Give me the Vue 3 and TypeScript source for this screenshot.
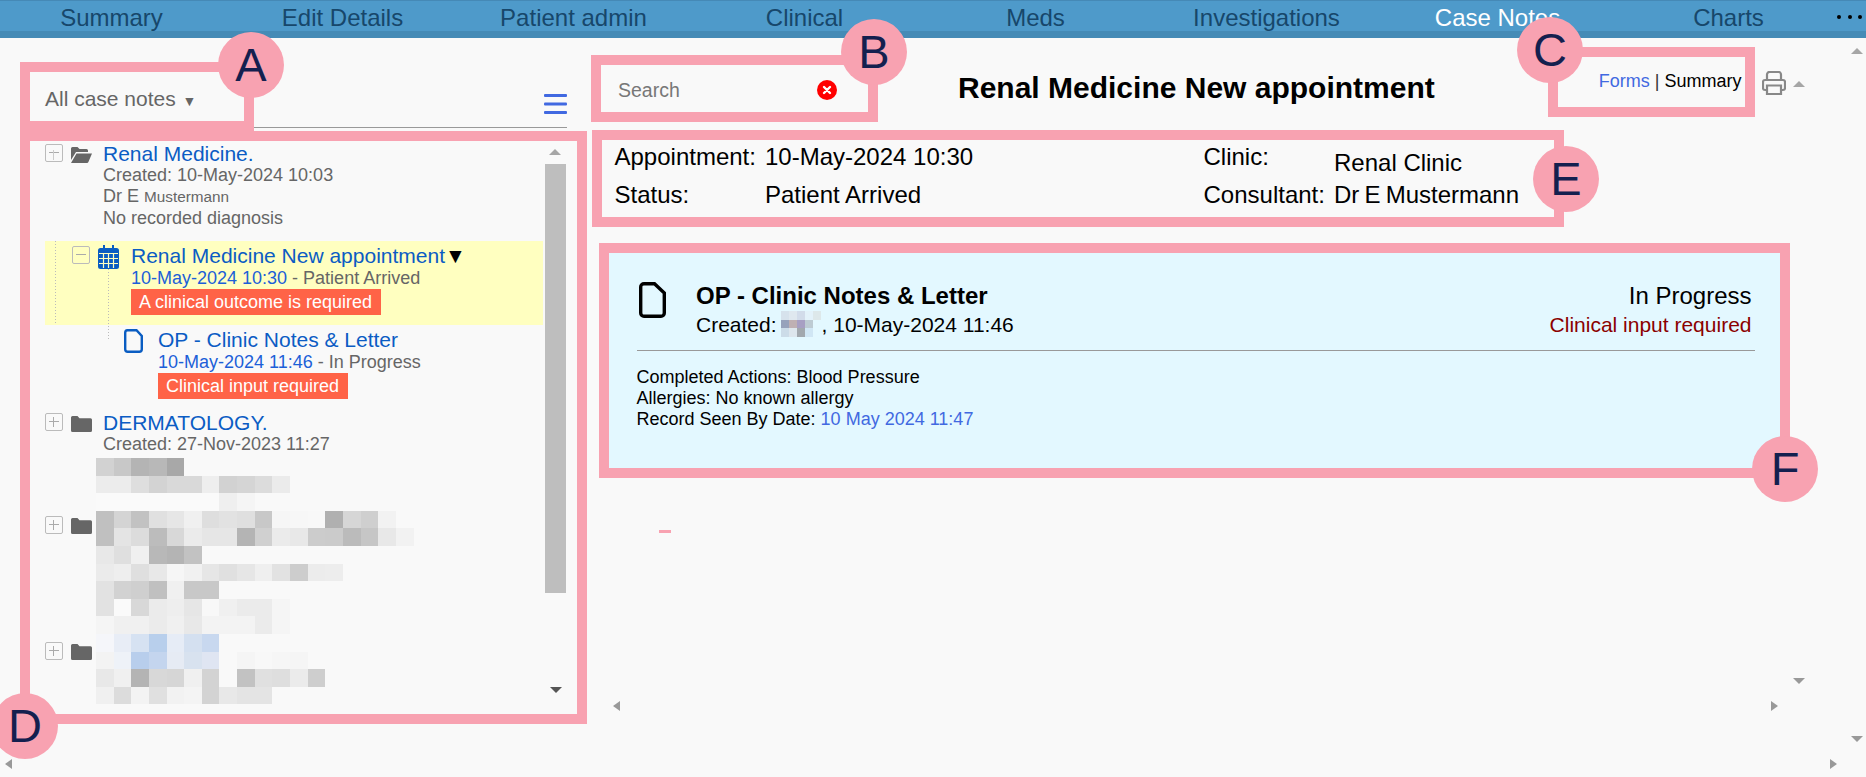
<script setup lang="ts">
const navItems = ['Summary', 'Edit Details', 'Patient admin', 'Clinical', 'Meds', 'Investigations', 'Case Notes', 'Charts']

// blurred patient details: two hex digits are a grey, six are a colour, empty is page background
const dermRows = [
  'd2 c8 b4 b8 a8',
  'ec ec de d3 d9 d9 ee d2 d5 dc eb',
  'fa fa fa fa fa fa fa ef f5',
]
const folderTwoRows = [
  'c0 d4 c2 e0 e6 f0 de e2 df c8 f6 f7 f8 b0 d6 cf f2',
  'c0 e4 dc bc d8 eb e6 e6 b4 d0 eb e8 cc cb bb c6 e8 f2',
  'e8 df f0 b8 b4 c2',
  'eb ee df e8 f6 f1 e6 e0 e6 ef e2 cd ec ed',
  'e2 d2 cf c0 f0 c8 c8',
  'e2 fa d8 eb ee e6 f8 f0 eb eb f5',
  'f5 f0 f0 eb f0 e8 f3 f3 f3 eb f5',
]
const folderThreeRows = [
  'f5f6fa e8edf6 d6e2f2 b8cfec e6ecf6 d4e0f0 c8d8ef',
  'f3 eef2f8 b8ceec c4d5ee e6ebf4 d8e2ef dfe5f2 f9 f5 f8 f6 f5',
  'e8 f0 b4 d8 d6 f0 d3 f9 c2 e0 de eb ce',
  'f0 dc f3 e0 f2 f4 d3 e8 e4 e4',
]
const authorRows = [
  'd6e2ec dfe8ef d2dcea e3f2fa dde8ea',
  '97a2bb bfb0b3 a79fc3 bdcbd3 e3f8ff',
  'ccdce8 dde6ed a2a8ae d0e6f4 e3f8ff',
]

function cells(row: string): string[] {
  return row.split(' ').map((c) => (c.length === 2 ? `#${c}${c}${c}` : `#${c}`))
}

const markers = ['a', 'b', 'c', 'd', 'e', 'f']
</script>

<template>
  <div class="page">
    <nav class="nav">
      <a v-for="item in navItems" :key="item" class="nav-item" :class="{ active: item === 'Case Notes' }">{{ item }}</a>
    </nav>

    <div class="workspace">
      <aside class="side">
        <div class="side-head">
          <span class="filter">All case notes <span class="filter-caret">▼</span></span>
          <svg class="burger" viewBox="0 0 23 20" fill="#4169e1">
            <rect width="23" height="3" rx="1" />
            <rect y="8.5" width="23" height="3" rx="1" />
            <rect y="17" width="23" height="3" rx="1" />
          </svg>
        </div>

        <div class="tree-wrap">
          <div class="tree">
            <div class="node">
              <span class="exp faint"></span>
              <svg class="folder" viewBox="0 0 21 16" fill="#666">
                <path d="M0 1.5A1.5 1.5 0 0 1 1.5 0h5l2 2h7A1.5 1.5 0 0 1 17 3.5V5H5L0 13z" />
                <path d="M5.5 6.5H21l-3.6 8.4a1.6 1.6 0 0 1-1.4 1H0z" />
              </svg>
              <div class="node-text">
                <a class="title">Renal Medicine.</a>
                <div class="meta">Created: 10-May-2024 10:03</div>
                <div class="meta">Dr E <span class="small-name">Mustermann</span></div>
                <div class="meta">No recorded diagnosis</div>
              </div>
            </div>

            <div class="appointment">
              <span class="exp"></span>
              <svg class="calendar" viewBox="0 0 21 24">
                <path fill="#0a5dc2" d="M5 0h2v3h7V0h2v3h2.5A2.500 2.500 0 0 1 21 5.500V21.500A2.500 2.500 0 0 1 18.500 24h-16A2.500 2.500 0 0 1 0 21.500V5.500A2.500 2.500 0 0 1 2.500 3H5z" />
                <path fill="none" stroke="#ffffc0" stroke-width="1.200" d="M1 8.500h19M1 13.500h19M1 18.500h19M5.500 8v15M10.500 8v15M15.500 8v15" />
              </svg>
              <div class="node-text">
                <a class="title">Renal Medicine New appointment<span class="title-caret">▼</span></a>
                <div class="meta dated"><span class="date">10-May-2024 10:30</span> - Patient Arrived</div>
                <span class="badge">A clinical outcome is required</span>
              </div>
            </div>

            <div class="document">
              <svg class="doc" viewBox="0 0 19 24" fill="none" stroke="#0a5dc2" stroke-width="2.400">
                <path d="M3.500 1.200H12.500L17.800 7v13.300a2.500 2.500 0 0 1-2.500 2.500H3.700A2.500 2.500 0 0 1 1.200 20.300v-16.600A2.500 2.500 0 0 1 3.500 1.200z" />
              </svg>
              <div class="node-text">
                <a class="title">OP - Clinic Notes &amp; Letter</a>
                <div class="meta dated"><span class="date">10-May-2024 11:46</span> - In Progress</div>
                <span class="badge">Clinical input required</span>
              </div>
            </div>

            <div class="node derm">
              <span class="exp plus"></span>
              <svg class="folder" viewBox="0 0 21 16" fill="#666">
                <path d="M0 1.500A1.500 1.500 0 0 1 1.500 0h5l2 2.200h11A1.500 1.500 0 0 1 21 3.700v10.800a1.500 1.500 0 0 1-1.500 1.500h-18A1.500 1.500 0 0 1 0 14.500z" />
              </svg>
              <div class="node-text">
                <a class="title">DERMATOLOGY.</a>
                <div class="meta">Created: 27-Nov-2023 11:27</div>
              </div>
            </div>
            <div class="mosaic derm-mosaic">
              <div v-for="(row, r) in dermRows" :key="r" class="mosaic-row">
                <i v-for="(c, i) in cells(row)" :key="i" :style="{ background: c }"></i>
              </div>
            </div>

            <div class="blur-node">
              <span class="exp plus"></span>
              <svg class="folder" viewBox="0 0 21 16" fill="#666">
                <path d="M0 1.500A1.500 1.500 0 0 1 1.500 0h5l2 2.200h11A1.500 1.500 0 0 1 21 3.700v10.800a1.500 1.500 0 0 1-1.500 1.500h-18A1.500 1.500 0 0 1 0 14.500z" />
              </svg>
              <div class="mosaic">
                <div v-for="(row, r) in folderTwoRows" :key="r" class="mosaic-row">
                  <i v-for="(c, i) in cells(row)" :key="i" :style="{ background: c }"></i>
                </div>
              </div>
            </div>

            <div class="blur-node third">
              <span class="exp plus"></span>
              <svg class="folder" viewBox="0 0 21 16" fill="#666">
                <path d="M0 1.500A1.500 1.500 0 0 1 1.500 0h5l2 2.200h11A1.500 1.500 0 0 1 21 3.700v10.800a1.500 1.500 0 0 1-1.500 1.500h-18A1.500 1.500 0 0 1 0 14.500z" />
              </svg>
              <div class="mosaic">
                <div v-for="(row, r) in folderThreeRows" :key="r" class="mosaic-row">
                  <i v-for="(c, i) in cells(row)" :key="i" :style="{ background: c }"></i>
                </div>
              </div>
            </div>
          </div>
          <div class="tree-scroll"><div class="thumb"></div></div>
        </div>
      </aside>

      <main class="main">
        <div class="top-row">
          <div class="search">
            <span class="search-text">Search</span>
            <svg class="clear" viewBox="0 0 20 20">
              <circle cx="10" cy="10" r="10" fill="#f00" />
              <path d="M7 7l6 6M13 7l-6 6" stroke="#fff" stroke-width="2.400" stroke-linecap="round" />
            </svg>
          </div>
          <h1 class="heading">Renal Medicine New appointment</h1>
          <div class="view-links"><a class="link">Forms</a> <span class="sep">|</span> Summary</div>
          <svg class="printer" viewBox="0 0 24 24" fill="none" stroke="#888" stroke-width="2.200">
            <path d="M5 9V3.500A2.500 2.500 0 0 1 7.500 1h9A2.500 2.500 0 0 1 19 3.500V9" />
            <path d="M5 19H3a2 2 0 0 1-2-2v-6a2 2 0 0 1 2-2h18a2 2 0 0 1 2 2v6a2 2 0 0 1-2 2h-2" />
            <path d="M5 14.500h14V23H5z" />
          </svg>
        </div>

        <div class="info">
          <span>Appointment:</span><span>10-May-2024 10:30</span><span>Clinic:</span><span class="clinic">Renal Clinic</span>
          <span>Status:</span><span>Patient Arrived</span><span>Consultant:</span><span class="consultant">Dr E Mustermann</span>
        </div>

        <section class="card">
          <div class="card-head">
            <svg class="card-icon" viewBox="0 0 27 36" fill="none" stroke="#000" stroke-width="3.400">
              <path d="M5 1.700H15.500L25.300 11v20a3.300 3.300 0 0 1-3.300 3.300H5A3.300 3.300 0 0 1 1.700 31V5A3.300 3.300 0 0 1 5 1.700z" />
            </svg>
            <div class="card-title">
              <strong>OP - Clinic Notes &amp; Letter</strong>
              <div class="created">
                <span>Created:</span>
                <span class="mosaic author">
                  <span v-for="(row, r) in authorRows" :key="r" class="mosaic-row">
                    <i v-for="(c, i) in cells(row)" :key="i" :style="{ background: c }"></i>
                  </span>
                </span>
                <span>, 10-May-2024 11:46</span>
              </div>
            </div>
            <div class="card-status">
              <div class="status-main">In Progress</div>
              <div class="status-alert">Clinical input required</div>
            </div>
          </div>
          <div class="card-body">
            <div>Completed Actions: Blood Pressure</div>
            <div>Allergies: No known allergy</div>
            <div>Record Seen By Date: <span class="link">10 May 2024 11:47</span></div>
          </div>
        </section>
      </main>
    </div>

    <span class="more"><i></i><i></i><i></i></span>

    <!-- scrollbar arrows -->
    <i class="arrow up tree-up"></i>
    <i class="arrow down tree-down"></i>
    <i class="arrow up print-up"></i>
    <i class="arrow up main-up"></i>
    <i class="arrow down main-down"></i>
    <i class="arrow left main-left"></i>
    <i class="arrow right main-right"></i>
    <i class="arrow down page-down"></i>
    <i class="arrow left page-left"></i>
    <i class="arrow right page-right"></i>

    <!-- annotation frames drawn on top of the screenshot -->
    <div v-for="m in markers" :key="m" class="frame" :class="`frame-${m}`"></div>
    <div class="stray"></div>
    <div v-for="m in markers" :key="m" class="marker" :class="`marker-${m}`">{{ m.toUpperCase() }}</div>
  </div>
</template>

<style>
html,
body {
  margin: 0;
  background: #f9f9f9;
}
</style>

<style scoped>
.page {
  position: relative;
  width: 1866px;
  height: 777px;
  overflow: hidden;
  background: #f9f9f9;
  color: #000;
  font-family: 'Liberation Sans', Arial, sans-serif;
}

.nav {
  display: grid;
  grid-template-columns: repeat(8, 231px);
  height: 38px;
  box-sizing: border-box;
  margin-left: -4px;
  background: #4e9aca;
  border-top: 1px solid #4589b6;
  border-bottom: 7px solid #458bb6;
}

.nav-item {
  font-size: 24px;
  line-height: 33px;
  text-align: center;
  color: #17476b;
}

.nav-item.active {
  color: #fff;
}

.more {
  position: absolute;
  left: 1837px;
  top: 15px;
  display: flex;
  gap: 6.500px;
}

.more i {
  width: 4px;
  height: 4px;
  border-radius: 50%;
  background: #000;
}

.workspace {
  display: flex;
}

.side {
  width: 597px;
  padding-left: 45px;
  box-sizing: border-box;
}

.side-head {
  display: flex;
  justify-content: space-between;
  align-items: flex-start;
  width: 522px;
  height: 90px;
  box-sizing: border-box;
  padding-top: 49px;
  border-bottom: 1px solid #999;
}

.filter {
  font-size: 21px;
  line-height: 24px;
  color: #666;
}

.filter-caret {
  font-size: 14px;
  margin-left: 1px;
}

.burger {
  width: 23px;
  height: 20px;
  margin-top: 7px;
}

.tree-wrap {
  display: flex;
  width: 521px;
  height: 580px;
}

.tree {
  width: 498px;
  padding-top: 15px;
  margin-right: 2px;
}

.node {
  display: flex;
  align-items: flex-start;
}

.exp {
  position: relative;
  flex: none;
  width: 18px;
  height: 18px;
  margin-top: 1px;
  box-sizing: border-box;
  border: 1.500px solid #bbb;
  border-radius: 2px;
}

.exp::before {
  content: '';
  position: absolute;
  left: 3px;
  right: 3px;
  top: 7px;
  height: 1px;
  background: #aaa;
}

.exp.plus::after {
  content: '';
  position: absolute;
  top: 3px;
  bottom: 3px;
  left: 7px;
  width: 1px;
  background: #aaa;
}

.exp.faint::after {
  content: '';
  position: absolute;
  top: 5px;
  bottom: 1px;
  left: 7px;
  width: 1px;
  background: #ccc;
}

.folder {
  flex: none;
  width: 21px;
  height: 16px;
  margin: 4px 11px 0 8px;
}

.node-text {
  flex: 1;
  min-width: 0;
}

.title {
  display: block;
  font-size: 21px;
  line-height: 22px;
  color: #0b5cc4;
  white-space: nowrap;
}

.title-caret {
  color: #000;
}

.meta {
  font-size: 18px;
  line-height: 21.400px;
  color: #666;
  white-space: nowrap;
}

.meta.dated {
  line-height: 22px;
}

.small-name {
  font-size: 15.300px;
}

.date {
  color: #1c5fd8;
}

.badge {
  display: inline-block;
  font-size: 18px;
  line-height: 26px;
  color: #fff;
  background: #ff6347;
  padding: 0 9px 0 8px;
  vertical-align: top;
}

.appointment {
  position: relative;
  display: flex;
  align-items: flex-start;
  height: 84px;
  box-sizing: border-box;
  margin-top: 12px;
  padding: 4px 0 0 27px;
  background: #ffffc0;
}

.appointment::before,
.appointment::after {
  content: '';
  position: absolute;
  width: 1px;
  background: repeating-linear-gradient(#bbb 0 1px, transparent 1px 3px);
}

.appointment::before {
  left: 10px;
  top: 0;
  bottom: 0;
}

.appointment::after {
  left: 63px;
  top: 28px;
  height: 71px;
}

.calendar {
  flex: none;
  width: 21px;
  height: 24px;
  margin: 0 12.500px 0 7.500px;
}

.document {
  display: flex;
  align-items: flex-start;
  padding: 4px 0 0 79px;
}

.doc {
  flex: none;
  width: 19px;
  height: 24px;
  margin: 0 15px 0 0;
}

.derm {
  margin-top: 12.400px;
}

.mosaic {
  display: block;
}

.mosaic-row {
  display: flex;
  height: 17.600px;
}

.mosaic-row i {
  width: 17.650px;
  flex: none;
}

.derm-mosaic {
  margin: 3px 0 0 51px;
}

.blur-node {
  display: flex;
  align-items: flex-start;
}

.blur-node .exp {
  margin-top: 5px;
}

.blur-node .folder {
  margin: 7px 4px 0 8px;
}

.blur-node.third .exp {
  margin-top: 8px;
}

.blur-node.third .folder {
  margin-top: 10px;
}

.tree-scroll {
  width: 21px;
  padding-top: 36px;
}

.thumb {
  height: 429px;
  background: #bebebe;
}

.main {
  flex: 1;
  min-width: 0;
}

.top-row {
  display: flex;
  align-items: flex-start;
  height: 100px;
  box-sizing: border-box;
}

.search {
  display: flex;
  justify-content: space-between;
  align-items: center;
  width: 219px;
  margin: 41px 0 0 21px;
}

.search-text {
  font-size: 19.500px;
  line-height: 22px;
  color: #777;
}

.clear {
  width: 20px;
  height: 20px;
}

.heading {
  margin: 33px 0 0 121px;
  font-size: 30px;
  line-height: 34px;
  font-weight: 700;
  white-space: nowrap;
}

.view-links {
  margin: 33px 0 0 auto;
  font-size: 18px;
  line-height: 20px;
  white-space: nowrap;
}

.link {
  color: #4169e1;
}

.sep {
  color: #333;
}

.printer {
  width: 24px;
  height: 24px;
  margin: 33px 80px 0 20.500px;
}

.info {
  display: grid;
  grid-template-columns: 150.500px 438.500px 130.500px auto;
  grid-auto-rows: 38px;
  margin-left: 17.500px;
  font-size: 24px;
  line-height: 38px;
  white-space: nowrap;
}

.clinic {
  align-self: end;
  line-height: 26px;
}

.consultant {
  word-spacing: -1.500px;
}

.card {
  box-sizing: border-box;
  width: 1171px;
  height: 215px;
  margin: 39px 0 0 12px;
  padding: 27.500px 25.500px 0 27.500px;
  background: #e3f8ff;
}

.card-head {
  display: flex;
  align-items: flex-start;
  height: 70px;
  border-bottom: 1px solid #999;
  box-sizing: border-box;
}

.card-icon {
  flex: none;
  width: 27px;
  height: 36px;
  margin: 1px 30px 0 2.500px;
}

.card-title strong {
  display: block;
  font-size: 24px;
  line-height: 29px;
}

.created {
  display: flex;
  align-items: center;
  font-size: 21px;
  line-height: 29px;
  white-space: nowrap;
}

.author {
  flex: none;
  margin-left: 4px;
  width: 41px;
}

.author .mosaic-row {
  height: 8.700px;
}

.author .mosaic-row i {
  width: 8.200px;
}

.card-status {
  margin: 0 3px 0 auto;
  text-align: right;
}

.status-main {
  font-size: 24px;
  line-height: 29px;
}

.status-alert {
  font-size: 21px;
  line-height: 29px;
  color: #8b0000;
}

.card-body {
  margin-top: 16px;
  font-size: 18px;
  line-height: 21px;
}

.arrow {
  position: absolute;
  width: 0;
  height: 0;
  border-style: solid;
  border-color: transparent;
}

.arrow.up {
  border-width: 0 6px 6px;
  border-bottom-color: #a6a6a6;
}

.arrow.down {
  border-width: 6px 6px 0;
  border-top-color: #999;
}

.arrow.left {
  border-width: 5.500px 7px 5.500px 0;
  border-right-color: #999;
}

.arrow.right {
  border-width: 5.500px 0 5.500px 7px;
  border-left-color: #999;
}

.tree-up { left: 549px; top: 149px; }
.arrow.tree-down { left: 550px; top: 687px; border-top-color: #555; }
.print-up { left: 1793px; top: 81px; }
.main-up { left: 1851px; top: 48px; }
.main-down { left: 1793px; top: 678px; }
.main-left { left: 613px; top: 701px; }
.main-right { left: 1771px; top: 701px; }
.page-down { left: 1851px; top: 736px; }
.page-left { left: 5px; top: 759px; }
.page-right { left: 1830px; top: 759px; }

.frame {
  position: absolute;
  box-sizing: border-box;
  border: 10px solid #f8a2b1;
}

.frame-a { left: 20px; top: 62px; width: 234px; height: 69px; }
.frame-b { left: 591px; top: 55px; width: 287px; height: 67px; }
.frame-c { left: 1548px; top: 47px; width: 207px; height: 70px; }
.frame-d { left: 20px; top: 131px; width: 567px; height: 593px; }
.frame-e { left: 592px; top: 130px; width: 972px; height: 97px; }
.frame-f { left: 599px; top: 243px; width: 1191px; height: 235px; }

.stray {
  position: absolute;
  left: 659px;
  top: 530px;
  width: 12px;
  height: 3px;
  background: #f8a2b1;
}

.marker {
  position: absolute;
  width: 66px;
  height: 66px;
  border-radius: 50%;
  background: #f8a2b1;
  color: #14204f;
  font-size: 47px;
  line-height: 66px;
  text-align: center;
}

.marker-a { left: 218px; top: 32px; }
.marker-b { left: 841px; top: 19px; }
.marker-c { left: 1517px; top: 17px; }
.marker-d { left: -8px; top: 693px; }
.marker-e { left: 1533px; top: 146px; }
.marker-f { left: 1752px; top: 436px; }
</style>
